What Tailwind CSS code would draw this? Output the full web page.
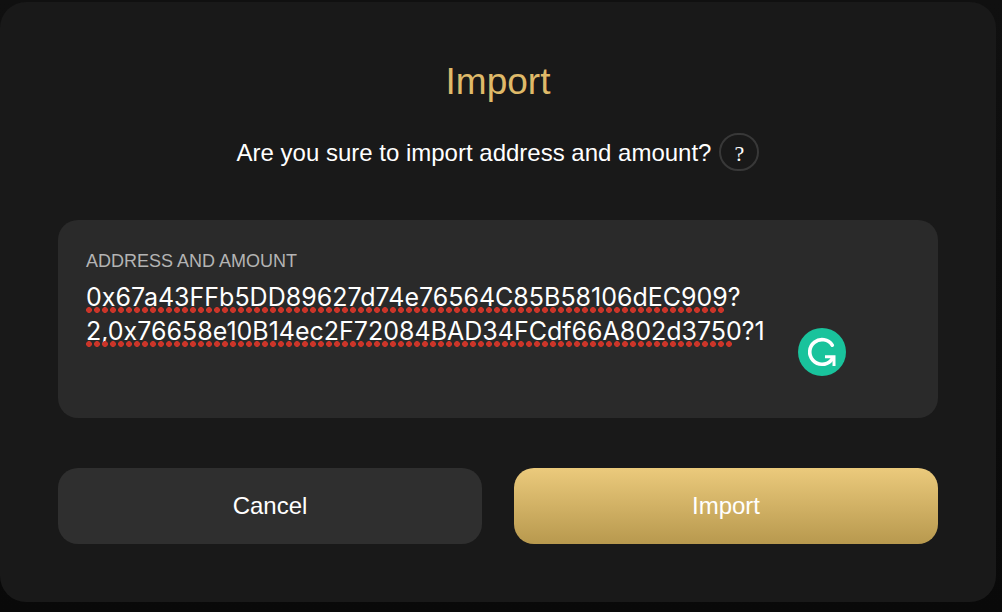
<!DOCTYPE html>
<html lang="en">
<head>
<meta charset="utf-8">
<meta name="viewport" content="width=device-width, initial-scale=1">
<title>Import</title>
<script src="https://cdn.jsdelivr.net/npm/@tailwindcss/browser@4"></script>
</head>
<body class="min-h-screen bg-linear-to-b from-[#101010] to-[#090909] pt-[2px] pr-[6px] pb-[10px] font-['Liberation_Sans',sans-serif] text-white">
  <main role="dialog" aria-labelledby="title" class="rounded-[26px] bg-[#191919] px-[58px] pt-[56px] pb-[58px]">
    <h1 id="title" class="text-center text-[37px] leading-[48px] text-[#dfba69]">Import</h1>
    <div class="mt-[26px] flex items-center justify-center gap-2">
      <p class="pt-[2px] text-[24px] leading-[38px]">Are you sure to import address and amount?</p>
      <button type="button" aria-label="Help" class="flex h-[38px] w-[40px] items-center justify-center rounded-full border-2 border-[#383838] pt-1 font-['Liberation_Serif',serif] text-[22px] leading-none">?</button>
    </div>
    <div class="relative mt-[48px] rounded-[20px] bg-[#2a2a2a] px-[28px] pt-[28px] pb-[20px]">
      <label for="entries" class="block text-[18px] leading-[26px] text-[#b4b4b4]">ADDRESS AND AMOUNT</label>
      <div class="relative mt-[6px]">
        <textarea id="entries" spellcheck="false" class="block h-[118px] w-full resize-none overflow-hidden bg-transparent font-['Inter','Liberation_Sans',sans-serif] text-[25px] leading-[34px] outline-none">0x67a43FFb5DD89627d74e76564C85B58106dEC909?
2,0x76658e10B14ec2F72084BAD34FCdf66A802d3750?1</textarea>
        <span class="pointer-events-none absolute top-[27px] left-0 h-[6px] w-[638px] bg-[radial-gradient(circle_at_3px_3px,#cb3529_2.6px,transparent_3.2px)] bg-size-[8px_6px]"></span>
        <span class="pointer-events-none absolute top-[61px] left-0 h-[6px] w-[646px] bg-[radial-gradient(circle_at_3px_3px,#cb3529_2.6px,transparent_3.2px)] bg-size-[8px_6px]"></span>
      </div>
      <button type="button" aria-label="Grammarly" class="absolute right-[92px] bottom-[42px] size-12 rounded-full bg-[#19c39c]">
        <svg viewBox="0 0 48 48" class="size-12" fill="none" stroke="#fff" stroke-width="3.6">
          <path d="M34.3 17.2A12.3 12.3 0 1 0 33 32.4L35 30" stroke-linecap="round"/>
          <path d="M27 28.8H36V38" stroke-width="3"/>
        </svg>
      </button>
    </div>
    <div class="mt-[50px] grid grid-cols-2 gap-8 text-[24px]">
      <button type="button" class="h-[76px] rounded-[20px] bg-[#2f2f2f]">Cancel</button>
      <button type="button" class="h-[76px] rounded-[20px] bg-linear-to-b from-[#ebca7c] to-[#b8994e]">Import</button>
    </div>
  </main>
</body>
</html>
